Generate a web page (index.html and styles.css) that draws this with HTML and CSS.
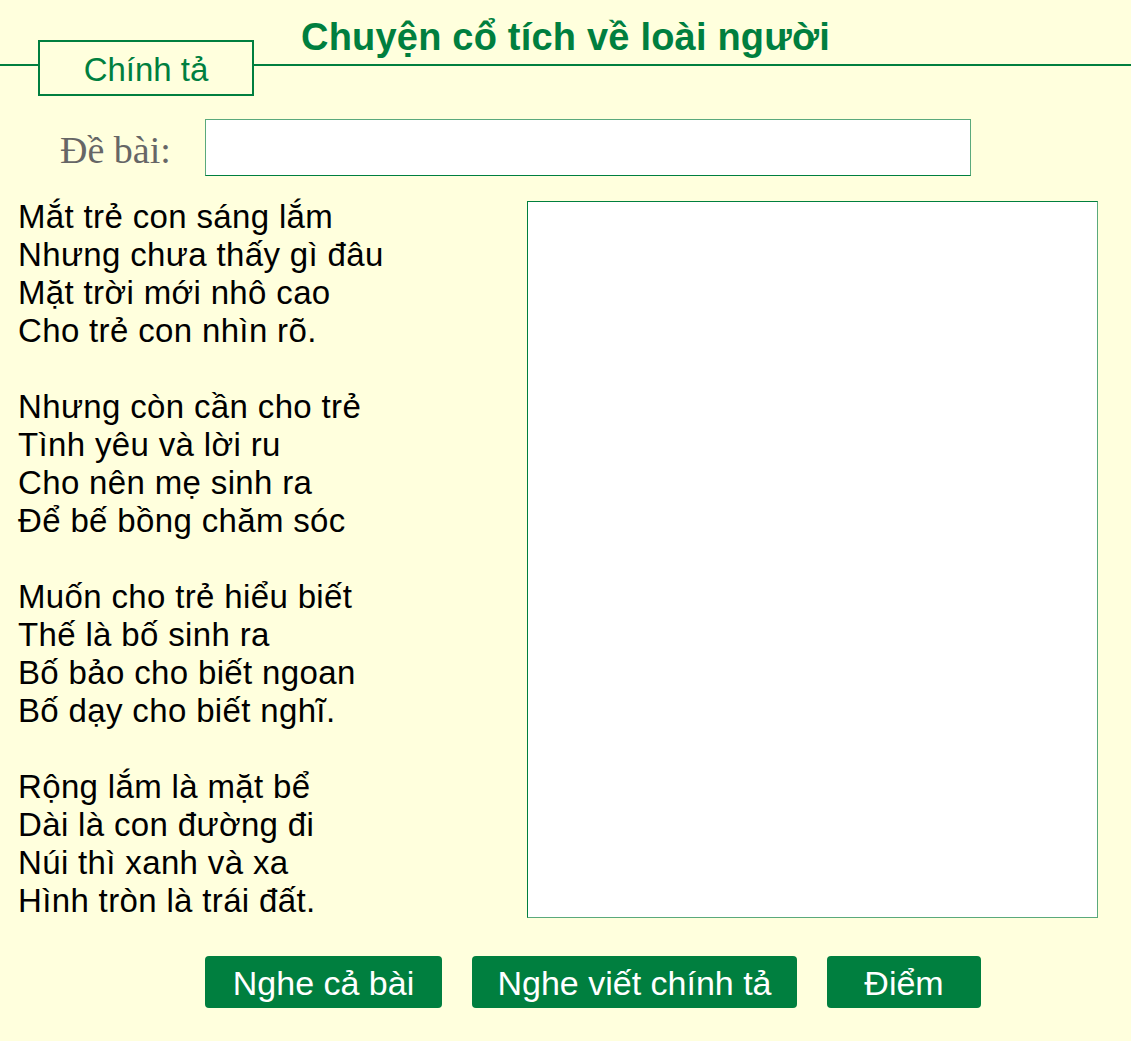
FILE: index.html
```html
<!DOCTYPE html>
<html lang="vi">
<head>
  <meta charset="UTF-8" />
  <meta name="viewport" content="width=device-width, initial-scale=1.0" />
  <title>Chính tả - Chuyện cổ tích về loài người</title>
  <link rel="stylesheet" href="styles.css">
</head>
<body>
  <div class="header">
    <h1>Chuyện cổ tích về loài người</h1>
  </div>
  <div class="tab">Chính tả</div>

  <div class="prompt">
    <label class="prompt-label" for="debai">Đề bài:</label>
    <input class="prompt-input" type="text" id="debai" />
  </div>

  <div class="content">
    <div class="poem">
      <p>Mắt trẻ con sáng lắm<br>Nhưng chưa thấy gì đâu<br>Mặt trời mới nhô cao<br>Cho trẻ con nhìn rõ.</p>
      <p>Nhưng còn cần cho trẻ<br>Tình yêu và lời ru<br>Cho nên mẹ sinh ra<br>Để bế bồng chăm sóc</p>
      <p>Muốn cho trẻ hiểu biết<br>Thế là bố sinh ra<br>Bố bảo cho biết ngoan<br>Bố dạy cho biết nghĩ.</p>
      <p>Rộng lắm là mặt bể<br>Dài là con đường đi<br>Núi thì xanh và xa<br>Hình tròn là trái đất.</p>
    </div>
    <textarea class="answer"></textarea>
  </div>

  <div class="actions">
    <button class="btn btn-all" type="button">Nghe cả bài</button>
    <button class="btn btn-dictate" type="button">Nghe viết chính tả</button>
    <button class="btn btn-score" type="button">Điểm</button>
  </div>
</body>
</html>
```

FILE: styles.css
```css
:root {
  --xanh: #007f3f;
  --xanh-nhat: #5aa97c;
  --nen: #ffffdd;
}
body {
  margin: 0;
  background: var(--nen);
  font-family: 'Liberation Sans', Arial, sans-serif;
  color: #000;
}
.header {
  padding: 17px 0 7px;
  border-bottom: 2px solid var(--xanh);
  text-align: center;
}
h1 {
  margin: 0;
  font-size: 38px;
  line-height: 40px;
  letter-spacing: 0.2px;
  font-weight: bold;
  color: var(--xanh);
}
.tab {
  box-sizing: border-box;
  width: 216px;
  height: 56px;
  margin: -26px 0 0 38px;
  padding-top: 3px;
  border: 2px solid var(--xanh);
  background: var(--nen);
  color: var(--xanh);
  font-size: 33px;
  line-height: 50px;
  text-align: center;
}
.prompt {
  display: flex;
  align-items: center;
  margin-top: 23px;
  padding-left: 60px;
}
.prompt-label {
  width: 145px;
  padding-top: 4px;
  font-family: 'Liberation Serif', 'Times New Roman', serif;
  font-size: 38px;
  color: #666;
}
.prompt-input {
  box-sizing: border-box;
  width: 766px;
  height: 57px;
  margin: 0;
  border: 1px solid var(--xanh-nhat);
  border-bottom-color: var(--xanh);
  background: #fff;
  outline: none;
}
.content {
  display: flex;
  align-items: flex-start;
  margin-top: 22px;
}
.poem {
  box-sizing: border-box;
  flex: 0 0 527px;
  padding-left: 18px;
  font-size: 33px;
  line-height: 38px;
  letter-spacing: 0.35px;
}
.poem p {
  margin: 0 0 38px;
}
.poem p:last-child {
  margin-bottom: 0;
}
.answer {
  box-sizing: border-box;
  width: 571px;
  height: 717px;
  margin: 3px 0 0;
  border: 1px solid var(--xanh);
  border-right-color: var(--xanh-nhat);
  border-bottom-color: var(--xanh-nhat);
  background: #fff;
  resize: none;
  outline: none;
}
.actions {
  display: flex;
  gap: 30px;
  margin-top: 36px;
  padding-left: 205px;
}
.btn {
  height: 52px;
  padding: 3px 0 0;
  border: none;
  border-radius: 4px;
  background: var(--xanh);
  color: #fff;
  font-family: 'Liberation Sans', Arial, sans-serif;
  font-size: 34px;
  cursor: pointer;
}
.btn-all { width: 237px; }
.btn-dictate { width: 325px; }
.btn-score { width: 154px; }
```
